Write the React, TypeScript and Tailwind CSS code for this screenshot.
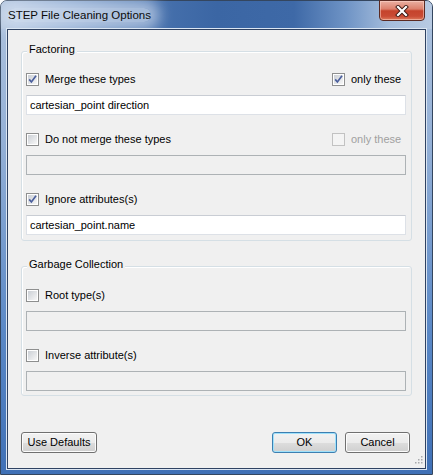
import { useId } from "react";

const font = "font-['Liberation_Sans',Arial,sans-serif]";

function CheckBox({ checked = false, disabled = false }: { checked?: boolean; disabled?: boolean }) {
  const id = useId();
  return (
    <svg width="13" height="13" viewBox="0 0 13 13" className="shrink-0">
      <defs>
        <linearGradient id={id} x1="0" y1="0" x2="1" y2="1">
          <stop offset="0" stopColor="#cbcfd5" />
          <stop offset="1" stopColor="#f7f7f7" />
        </linearGradient>
      </defs>
      {disabled ? (
        <rect x="0.5" y="0.5" width="12" height="12" fill="#f4f4f4" stroke="#c2c2c2" />
      ) : (
        <>
          <rect x="0.5" y="0.5" width="12" height="12" fill="#ffffff" stroke="#8e8f8f" />
          <rect x="2" y="2" width="9" height="9" fill={`url(#${id})`} />
        </>
      )}
      {checked && (
        <path d="M3.2 6.4 L5.4 9 L10 2.8" fill="none" stroke="#4b5f9d" strokeWidth="1.7" />
      )}
    </svg>
  );
}

function Row({
  label,
  checked,
  right,
}: {
  label: string;
  checked?: boolean;
  right?: { checked: boolean; disabled: boolean };
}) {
  return (
    <div className="flex h-[13px] items-center justify-between">
      <div className="flex items-center gap-[6px]">
        <CheckBox checked={checked} />
        <span className="leading-[13px]">{label}</span>
      </div>
      {right && (
        <div className="flex w-[74px] items-center gap-[6px]">
          <CheckBox checked={right.checked} disabled={right.disabled} />
          <span className={`leading-[13px] ${right.disabled ? "text-[#a0a0a0]" : ""}`}>only these</span>
        </div>
      )}
    </div>
  );
}

function TextBox({ value, disabled = false }: { value?: string; disabled?: boolean }) {
  return (
    <div
      className={`mt-[9px] flex h-[20px] items-center border pl-[3px] ${
        disabled
          ? "border-[#adb2b5] bg-[#f0f0f0]"
          : "border-[#dde1e7] border-t-[#c9cdd4] bg-white"
      }`}
    >
      {value}
    </div>
  );
}

function GroupBox({ title, children }: { title: string; children: React.ReactNode }) {
  return (
    <div className="flex flex-col rounded-[3px] border border-[#d5dfe5] pl-[4px] pr-[5px] shadow-[inset_1px_1px_0_#ffffff]">
      <div className="-mt-[10px] ml-[1px] self-start bg-[#f0f0f0] px-[2px] leading-[14px]">{title}</div>
      {children}
    </div>
  );
}

function Button({ label, primary = false, width }: { label: string; primary?: boolean; width: string }) {
  return (
    <div
      className={`flex h-[21px] ${width} items-center justify-center rounded-[3px] border ${
        primary
          ? "border-[#3c7fb1] shadow-[inset_0_0_0_1px_#9fe1fb]"
          : "border-[#707070] shadow-[inset_0_0_0_1px_#fcfcfc]"
      } bg-[linear-gradient(180deg,#f2f2f2_0%,#ebebeb_50%,#dddddd_51%,#cfcfcf_100%)]`}
    >
      {label}
    </div>
  );
}

export default function App() {
  return (
    <div className={`h-[475px] w-[433px] ${font} text-[11px] text-black`}>
      <div className="flex h-full w-full flex-col rounded-t-[7px] border border-[#34465f] bg-[linear-gradient(180deg,#aec3de_0%,#94b0d6_30%,#5a88c6_70%,#3f70b6_100%)]">
        {/* title bar */}
        <div className="flex h-[28px] items-start rounded-t-[6px] bg-[linear-gradient(90deg,#b2c5de_0%,#a6bcda_4%,#7f9fcb_16%,#4a74af_32%,#3b66a4_50%,#3e69a7_68%,#6e93c5_80%,#a5bddc_90%,#b8cae2_100%)]">
          <span className="ml-[7px] mt-[7px] rounded-[12px] bg-[#e3ebf6]/60 text-[11.5px] leading-[14px] text-[#0b0b0b] shadow-[0_0_14px_9px_rgba(225,234,246,0.6)]">
            STEP File Cleaning Options
          </span>
          <div className="-mt-px ml-auto mr-[7px] flex h-[21px] w-[46px] items-center justify-center rounded-b-[4px] border border-[#5b2a22] bg-[linear-gradient(180deg,#eab0a2_0%,#dc806c_42%,#c5432c_52%,#c94b34_80%,#de7a5c_100%)] shadow-[inset_0_0_0_1px_rgba(255,220,210,0.5)]">
            <svg width="16" height="12" viewBox="0 0 16 12">
              <path d="M4 2 L12 10 M12 2 L4 10" stroke="#3a1812" strokeWidth="4" strokeLinecap="square" />
              <path d="M4 2 L12 10 M12 2 L4 10" stroke="#ffffff" strokeWidth="2.2" strokeLinecap="square" />
            </svg>
          </div>
        </div>

        {/* client area */}
        <div className="relative mx-[6px] flex h-[440px] flex-col border border-[#2f4262] bg-[#f0f0f0] px-[13px] pt-[21px] shadow-[0_0_0_1px_#dbe6f3]">
          <GroupBox title="Factoring">
            <div className="mt-[17px]">
              <Row label="Merge these types" checked right={{ checked: true, disabled: false }} />
            </div>
            <TextBox value="cartesian_point direction" />
            <div className="mt-[18px]">
              <Row label="Do not merge these types" right={{ checked: false, disabled: true }} />
            </div>
            <TextBox disabled />
            <div className="mt-[18px]">
              <Row label="Ignore attributes(s)" checked />
            </div>
            <TextBox value="cartesian_point.name" />
            <div className="h-[5px]" />
          </GroupBox>

          <div className="mt-[25px]">
            <GroupBox title="Garbage Collection">
              <div className="mt-[18px]">
                <Row label="Root type(s)" />
              </div>
              <TextBox disabled />
              <div className="mt-[18px]">
                <Row label="Inverse attribute(s)" />
              </div>
              <TextBox disabled />
              <div className="h-[4px]" />
            </GroupBox>
          </div>

          <div className="mr-[2px] mt-[36px] flex items-center">
            <Button label="Use Defaults" width="w-[76px]" />
            <div className="ml-auto flex gap-[8px]">
              <Button label="OK" primary width="w-[65px]" />
              <Button label="Cancel" width="w-[65px]" />
            </div>
          </div>

          <svg width="10" height="10" viewBox="0 0 10 10" className="absolute bottom-[2px] right-[2px]">
            {[
              [8, 0],
              [8, 3],
              [5, 3],
              [8, 6],
              [5, 6],
              [2, 6],
            ].map(([x, y], i) => (
              <rect key={i} x={x} y={y} width="1.5" height="1.5" fill="#a7a9ac" />
            ))}
          </svg>
        </div>
      </div>
    </div>
  );
}
